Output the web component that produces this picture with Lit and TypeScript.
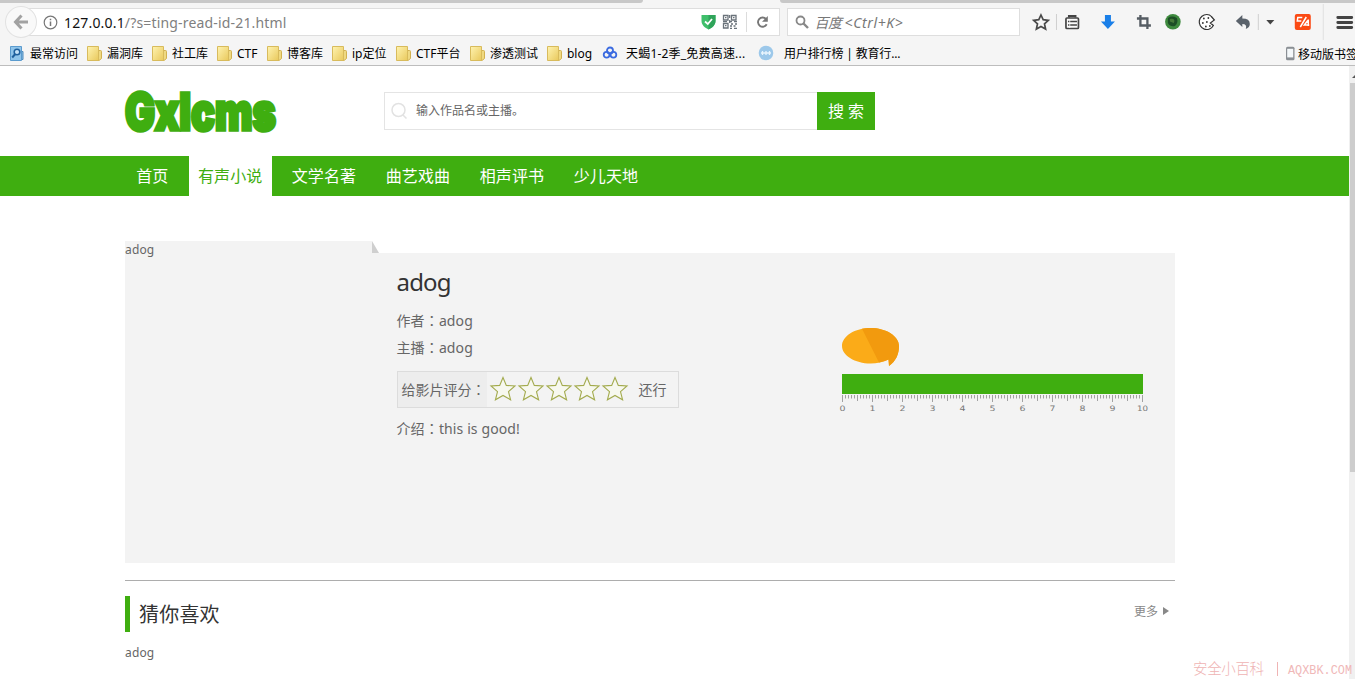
import { LitElement, html, css, svg } from "lit";
import { customElement } from "lit/decorators.js";

const fonts = css`"Noto Sans", "Noto Sans CJK SC", sans-serif`;

const folder = html`<svg class="ic" width="16" height="17" viewBox="0 0 16 17">
  <defs><linearGradient id="f" x1="0" y1="0" x2="1" y2="1"><stop offset="0" stop-color="#fff3b0"/><stop offset="1" stop-color="#e9c95c"/></linearGradient></defs>
  <path d="M10 5.500H13.500Q14.500 5.500 14.500 6.500V13.500L12 15.500H9z" fill="#efd981" stroke="#d2b250"/>
  <path d="M.5 1.500H11.500V15.500H.5z" fill="url(#f)" stroke="#d8bb5c"/></svg>`;
const visited = html`<svg class="ic" width="16" height="17" viewBox="0 0 16 17">
  <path d="M10 6.500H14V14.500H9z" fill="#8dc0e6" stroke="#4f8cbd"/>
  <path d="M1.500 1.500H12.500V15.500H1.500z" fill="#8fc4ea" stroke="#5b9bce"/>
  <circle cx="8" cy="7" r="2.800" fill="#c5e2f7" stroke="#1f5f9c" stroke-width="1.500"/><path d="M6.300 9L3.200 12.500" stroke="#1f5f9c" stroke-width="2"/></svg>`;
const cloud = html`<svg class="ic" width="16" height="16" viewBox="0 0 16 16" fill="none" stroke="#3b6be0" stroke-width="1.800">
  <circle cx="8" cy="5.500" r="3"/><circle cx="4.600" cy="9.800" r="2.900"/><circle cx="11.400" cy="9.800" r="2.900"/></svg>`;
const globe = html`<svg class="ic" width="16" height="16" viewBox="0 0 16 16"><circle cx="8" cy="8" r="7.300" fill="#9cc8ea"/>
  <path d="M3 8H13M4.500 6V10M8 6V10M11.500 6V10" stroke="#e9f5fd" stroke-width="1.300"/></svg>`;

const bookmarks = [
  { t: "最常访问", i: visited, c: "b-first" },
  { t: "漏洞库", i: folder, c: "b65" },
  { t: "社工库", i: folder, c: "b65" },
  { t: "CTF", i: folder, c: "b50" },
  { t: "博客库", i: folder, c: "b65" },
  { t: "ip定位", i: folder, c: "b64" },
  { t: "CTF平台", i: folder, c: "b74" },
  { t: "渗透测试", i: folder, c: "b77" },
  { t: "blog", i: folder, c: "b55" },
  { t: "天蝎1-2季_免费高速...", i: cloud, c: "b156" },
  { t: "用户排行榜 | 教育行...", i: globe, c: "b-last" },
];

@customElement("browser-chrome")
class BrowserChrome extends LitElement {
  static styles = css`
    :host { display: flex; flex-direction: column; height: 65px; background: #f5f5f5; border-bottom: 1px solid #bdbdbd; font-family: ${fonts}; }
    .tabs { display: flex; justify-content: space-between; height: 3px; }
    .strip { background: #c8c8c8; }
    .left { width: 643px; border-bottom-right-radius: 4px; }
    .right { width: 575px; border-bottom-left-radius: 4px; }
    .bar { display: flex; align-items: center; height: 38px; }
    .back { box-sizing: border-box; width: 32px; height: 32px; margin-left: 5px; border: 1px solid #e2e2e2; border-radius: 50%; background: #f9f9f9; display: grid; place-items: center; z-index: 1; }
    .url { box-sizing: border-box; display: flex; align-items: center; width: 761px; height: 28px; margin-left: -17px; border: 1px solid #dedede; background: #fff; padding-left: 22px; }
    .address { margin-left: 6px; width: 637px; font-size: 14px; color: #808080; white-space: nowrap; letter-spacing: .17px; line-height: 20px; padding-top: 1px; }
    .host { color: #111; }
    .qr { margin-left: 6px; }
    .split { width: 1px; height: 20px; background: #dcdcdc; margin: 0 8px; }
    .search { box-sizing: border-box; display: flex; align-items: center; width: 233px; height: 28px; margin-left: 7px; border: 1px solid #dedede; background: #fff; padding-left: 7px; font-size: 14px; font-style: italic; color: #777; gap: 5px; letter-spacing: .62px; }
    .cn { letter-spacing: -.5px; }
    .tools { display: block; }
    .marks { display: flex; height: 24px; padding-left: 9px; font-size: 12px; color: #000; align-items: center; white-space: nowrap; }
    .mark { display: flex; align-items: center; gap: 4px; line-height: 22px; letter-spacing: -.02px; }
    .mark span, .mobile span { padding-top: 2px; }
    .ic { flex: none; }
    .b-first { width: 78px; gap: 5px; } .b65 { width: 65px; } .b50 { width: 50px; } .b64 { width: 64px; }
    .b74 { width: 74px; } .b77 { width: 77px; } .b55 { width: 55px; }
    .b156 { width: 156px; gap: 8px; letter-spacing: .2px; } .b-last { gap: 10px; letter-spacing: -.15px; }
    .mobile { display: flex; align-items: center; margin-left: auto; width: 70px; gap: 2px; flex: none; }
  `;
  render() {
    return html`
      <div class="tabs"><div class="strip left"></div><div class="strip right"></div></div>
      <div class="bar">
        <div class="back"><svg width="16" height="16" viewBox="0 0 16 16" fill="none" stroke="#a2a2a2" stroke-width="3"><path d="M8.500 1.500L2.500 8L8.500 14.500M3 8H15"/></svg></div>
        <div class="url">
          <svg width="15" height="15" viewBox="0 0 15 15"><circle cx="7.500" cy="7.500" r="6.300" fill="none" stroke="#777" stroke-width="1.200"/><path d="M7.500 6.500V11M7.500 3.800V5.300" stroke="#777" stroke-width="1.500"/></svg>
          <div class="address"><span class="host">127.0.0.1</span>/?s=ting-read-id-21.html</div>
          <svg width="15" height="16" viewBox="0 0 15 16"><path d="M.5 1H14.500V7C14.500 11 11 14 7.500 15.500C4 14 .5 11 .5 7z" fill="#3fbf6b"/><path d="M7.500 1H14.500V7C14.500 11 11 14 7.500 15.500z" fill="#2fa45a"/><path d="M4 7.500L6.800 10L11 5" fill="none" stroke="#fff" stroke-width="1.800"/></svg>
          <svg class="qr" width="16" height="16" viewBox="0 0 16 16" fill="none" stroke="#6a727a" stroke-width="1.300"><path d="M1.500 1.500H6V6H1.500zM9.500 1.500H14V6H9.500zM1.500 9.500H6V14H1.500z"/><path d="M3 3.700H4.500M11 3.700H12.500M3 11.700H4.500M7.700 1V4M7.700 6V9M1 7.700H5M7 7.700H10M12 7.700H15M9 10H11M13 10H15M8 12H10M11.500 12H13.500M8 14.300H10M12 14.300H15"/></svg>
          <div class="split"></div>
          <svg width="15" height="15" viewBox="0 0 15 15"><path d="M11.700 9.300A4.600 4.600 0 1 1 11 4" fill="none" stroke="#777" stroke-width="1.900"/><path d="M12.800 1V6.800H7z" fill="#777"/></svg>
        </div>
        <div class="search"><svg width="14" height="14" viewBox="0 0 14 14" fill="none" stroke="#888"><circle cx="5.500" cy="5.500" r="4" stroke-width="1.800"/><path d="M8.500 8.500L13 13" stroke-width="2.400"/></svg><span><span class="cn">百度 </span>&lt;Ctrl+K&gt;</span></div>
        <svg class="tools" width="335" height="38" viewBox="1020 3 335 38">
          <path d="M1041 15L1043.200 19.700L1048.300 20.300L1044.500 23.800L1045.600 29L1041 26.400L1036.400 29L1037.500 23.800L1033.700 20.300L1038.800 19.700z" fill="none" stroke="#4a4a4a" stroke-width="1.700"/>
          <path d="M1056.500 14V30M1258.500 14V30" stroke="#cfcfcf"/><path d="M1323.500 4V40" stroke="#e0e0e0"/>
          <path d="M1069 17.500V16H1075.500V17.500" fill="none" stroke="#444" stroke-width="2"/><rect x="1066" y="18" width="12.500" height="10.500" rx="1" fill="#fafafa" stroke="#444" stroke-width="1.700"/><path d="M1068 21.500H1077M1068 25H1077" stroke="#444" stroke-width="1.300"/><path d="M1069.800 19V28" stroke="#fafafa" stroke-width=".8"/>
          <path d="M1105 15H1111V21.500H1115L1108 29L1101 21.500H1105z" fill="#1a7fe8"/>
          <path d="M1140.500 15V25.500H1151M1137 18.500H1147.500V29" fill="none" stroke="#555c63" stroke-width="2.300"/>
          <circle cx="1173" cy="21.800" r="7.800" fill="#3e8a3e"/><path d="M1168 18Q1172 15 1177 18Q1179 23 1175 26Q1170 27 1168 23z" fill="#1d4f26"/><path d="M1170 19Q1176 18 1174 23L1170 21.500" fill="#477a3a"/>
          <path d="M1207 14.500A7.500 7.500 0 1 0 1213.500 25.500L1210.500 23L1214.500 20L1211.500 16.500Q1210 14.500 1207 14.500z" fill="#fff" stroke="#333" stroke-width="1.200"/>
          <g fill="#333"><circle cx="1204" cy="18.500" r=".9"/><circle cx="1208.500" cy="18" r=".9"/><circle cx="1203" cy="23" r=".9"/><circle cx="1207" cy="22" r=".9"/><circle cx="1206" cy="26.500" r=".9"/><circle cx="1210" cy="26" r=".9"/></g>
          <path d="M1236 21L1242.500 15V18.500Q1250 18.500 1250 24Q1250 27.500 1246 29Q1247.500 24 1242.500 24V27z" fill="#5a626b"/>
          <path d="M1266.500 20H1274.500L1270.500 24.500z" fill="#444"/>
          <rect x="1295" y="14" width="16" height="16" rx="2" fill="#fb4a14"/><path d="M1302.500 17.500H1298L1297.500 21H1301.500M1306.500 17L1300.500 27M1308.500 19.500V26M1309.500 25H1304.500L1308 20.500" fill="none" stroke="#fff" stroke-width="1.500"/>
          <path d="M1338 17.500H1352M1338 22.500H1352M1338 27.500H1352" stroke="#444" stroke-width="2.800" stroke-linecap="round"/>
        </svg>
      </div>
      <div class="marks">
        ${bookmarks.map((b) => html`<div class="mark ${b.c}">${b.i}<span>${b.t}</span></div>`)}
        <div class="mobile"><svg class="ic" width="11" height="15" viewBox="0 0 11 15"><rect x="1" y=".8" width="8.500" height="13.400" rx="1.500" fill="#8a8f94"/><rect x="2.200" y="2.800" width="6" height="8.600" fill="#f4f8fa"/></svg><span>移动版书签</span></div>
      </div>`;
  }
}

const stars = [0, 1, 2, 3, 4];
const ticks = Array.from({ length: 101 }, (_, i) => i);
const colon = html`<span class="colon">：</span>`;

@customElement("app-root")
class AppRoot extends LitElement {
  static styles = css`
    :host { display: block; position: relative; width: 1355px; height: 679px; overflow: hidden; background: #fff; font-family: ${fonts}; color: #666; }
    .view { display: flex; height: 613px; }
    .page { width: 1349px; flex: none; }
    .scroll { flex: 1; background: #f0f0f0; padding-top: 17px; position: relative; }
    .thumb { height: 389px; margin-left: 1px; background: #cdcdcd; }
    .up { position: absolute; top: 8px; left: 3px; display: block; }
    .head { display: flex; height: 90px; padding-left: 124px; box-sizing: border-box; }
    .logo { margin-top: 24px; width: 155px; height: 46px; display: block; overflow: visible; }
    .logotext { font: 900 51px Inter, sans-serif; fill: #3fae10; stroke: #3fae10; stroke-width: 3.6px; }
    .find { display: flex; margin: 26px 0 0 105px; height: 38px; }
    .field { box-sizing: border-box; display: flex; align-items: center; width: 433px; border: 1px solid #e4e4e4; border-right: 0; padding-left: 6px; gap: 8px; font-size: 12px; line-height: 24px; color: #666; }
    .go { width: 58px; background: #3fae10; color: #fff; font-size: 16px; line-height: 38px; text-align: center; }
    .nav { display: flex; height: 40px; line-height: 40px; background: #3fae10; color: #fff; font-size: 16px; padding-left: 116px; letter-spacing: .12px; }
    .link { padding: 0 14.750px; white-space: nowrap; }
    .home { padding: 0 20px 0 20.250px; }
    .on { background: #fff; color: #3fae10; padding: 0 10px 0 9.500px; margin-right: 4.500px; }
    .body { width: 1050px; margin-left: 125px; }
    .panel { display: flex; margin-top: 45px; height: 322px; }
    .cover { position: relative; width: 247px; background: #f3f3f3; font-size: 12px; line-height: 18px; letter-spacing: .15px; }
    .fold { position: absolute; left: 247px; top: 0; }
    .info { box-sizing: border-box; display: flex; flex: 1; margin-top: 12px; background: #f3f3f3; padding-left: 24.500px; }
    .text { width: 445.500px; font-size: 14px; line-height: 27px; }
    .colon { font-family: "Noto Sans CJK TC", sans-serif; line-height: 1; }
    .name { font-size: 24px; font-weight: 400; color: #333; line-height: 34px; margin: 12px 0 8px; letter-spacing: -.8px; }
    .rate { box-sizing: border-box; display: flex; align-items: center; width: 282px; height: 37px; border: 1px solid #dcdcdc; margin: 10px 0 7px; }
    .lab { width: 85px; padding-left: 4px; margin-right: 1px; background: #ededed; line-height: 35px; white-space: nowrap; }
    .stars { display: block; margin: -2px 0 0 1px; }
    .ok { margin-left: 8px; }
    .good { letter-spacing: .12px; }
    .score { padding-top: 75px; }
    .score svg { display: block; overflow: visible; }
    .num { font: 7.500px "DejaVu Sans", sans-serif; fill: #777; }
    .rule { height: 1px; background: #adadad; margin-top: 17px; }
    .sec { display: flex; justify-content: space-between; margin-top: 15px; height: 36px; }
    .title { margin: 0; border-left: 5px solid #3fae10; padding-left: 9px; font-size: 20px; font-weight: 400; line-height: 38px; color: #333; letter-spacing: .2px; }
    .more { display: flex; align-items: center; gap: 5px; height: 30px; font-size: 12px; color: #888; padding-right: 6px; }
    .item { font-size: 12px; line-height: 18px; margin-top: 12px; letter-spacing: .15px; }
    .mark { position: absolute; left: 1193px; top: 656px; }
    .wm { font: 300 14.500px "Noto Sans CJK SC", sans-serif; fill: #efb4b4; }
    .wl { font: 12px "Liberation Mono", monospace; fill: #f0b8b8; }
  `;
  render() {
    return html`
      <browser-chrome></browser-chrome>
      <div class="view">
        <div class="page">
          <div class="head">
            <svg class="logo" viewBox="0 0 155 46"><text class="logotext" x="1" y="40" textLength="151" lengthAdjust="spacingAndGlyphs">Gxlcms</text></svg>
            <div class="find">
              <div class="field"><svg width="17" height="18" viewBox="0 0 17 18" fill="none" stroke="#e2e2e2" stroke-width="1.500"><circle cx="7.500" cy="8" r="6.500"/><path d="M12 13L15.500 16.500"/></svg><span>输入作品名或主播。</span></div>
              <div class="go">搜 索</div>
            </div>
          </div>
          <div class="nav">
            <div class="link home">首页</div><div class="link on">有声小说</div>
            ${["文学名著", "曲艺戏曲", "相声评书", "少儿天地"].map((t) => html`<div class="link">${t}</div>`)}
          </div>
          <div class="body">
            <div class="panel">
              <div class="cover">adog<svg class="fold" width="7" height="12" viewBox="0 0 7 12"><path d="M0 0L7 12H0z" fill="#cfcfcf"/></svg></div>
              <div class="info">
                <div class="text">
                  <h1 class="name">adog</h1>
                  <div class="good">作者${colon}adog</div><div class="good">主播${colon}adog</div>
                  <div class="rate"><div class="lab">给影片评分${colon}</div>
                    <svg class="stars" width="142" height="28" viewBox="0 0 142 28">${stars.map((i) => svg`<path transform="translate(${14 + i * 28} 14)" d="M0 -11.500L3.300 -3.600L12 -3L5.500 2.600L7.600 10.800L0 6.500L-7.600 10.800L-5.500 2.600L-12 -3L-3.300 -3.600z" fill="#f7f8ef" stroke="#a3ab4e" stroke-width="1.100"/>`)}</svg>
                    <div class="ok">还行</div></div>
                  <div class="good">介绍${colon}this is good!</div>
                </div>
                <div class="score">
                  <svg width="310" height="88" viewBox="0 0 310 88">
                    <path d="M28.500 0C44 0 57 8 57 18C57 26 54 33 47 38L46.500 31.500C41 34 35 35.500 28.500 35.500C13 35.500 0 27.500 0 18C0 8 13 0 28.500 0z" fill="#fbab18"/>
                    <path d="M20 .8C23 .2 25 0 28.500 0C44 0 57 8 57 18C57 26 54 33 47 38L46.500 31.500C43 33 41 33.500 37 34.500z" fill="#f29a0e"/>
                    <rect x="0" y="46" width="301" height="20" fill="#3fae10"/>
                    ${ticks.map((i) => svg`<path d="M${i * 3 + 0.5} 67V${i % 10 === 0 ? 74 : i % 5 === 0 ? 73 : 70.5}" stroke="#999" stroke-width=".9"/>`)}
                    ${ticks.filter((i) => i <= 10).map((i) => svg`<text class="num" x="${i === 10 ? 295 : i * 30 - 2.500}" y="83" textLength="${i === 10 ? 11 : 6}" lengthAdjust="spacingAndGlyphs">${i}</text>`)}
                  </svg>
                </div>
              </div>
            </div>
            <div class="rule"></div>
            <div class="sec"><h2 class="title">猜你喜欢</h2><div class="more">更多<svg width="6" height="8" viewBox="0 0 6 8"><path d="M0 0L6 4L0 8z" fill="#888"/></svg></div></div>
            <div class="item">adog</div>
          </div>
        </div>
        <div class="scroll"><svg class="up" width="5" height="4" viewBox="0 0 5 4"><path d="M0 4L4 0V4z" fill="#555"/></svg><div class="thumb"></div></div>
      </div>
      <svg class="mark" width="162" height="23" viewBox="0 0 162 23"><text class="wm" x="0" y="18" textLength="71">安全小百科</text><path d="M84.500 6V20" stroke="#efb4b4"/><text class="wl" x="95" y="18" textLength="64" lengthAdjust="spacingAndGlyphs">AQXBK.COM</text></svg>`;
  }
}
